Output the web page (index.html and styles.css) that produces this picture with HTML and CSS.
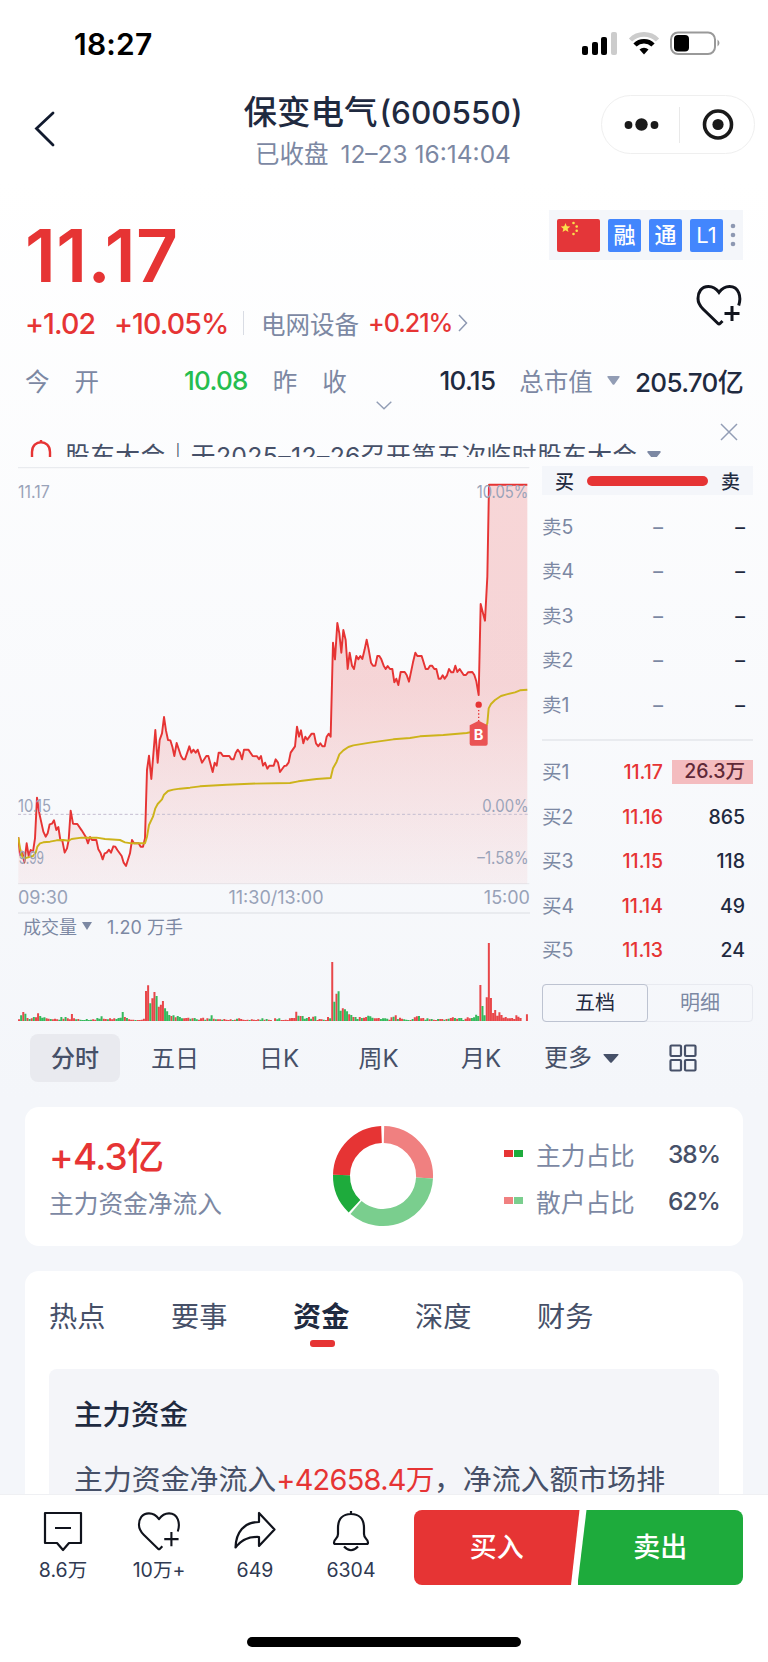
FILE: index.html
```html
<!DOCTYPE html>
<html lang="zh-CN">
<head>
<meta charset="utf-8">
<title>保变电气(600550)</title>
<link rel="stylesheet" href="styles.css">
</head>
<body>
<div class="page">
  <header class="status">
    <span class="clock">18:27</span>
    <svg class="status-icons" width="140" height="26" viewBox="0 0 140 26">
      <rect x="1" y="15" width="6" height="9" rx="2"/><rect x="11" y="11" width="6" height="13" rx="2"/><rect x="20" y="6" width="6" height="18" rx="2"/><rect x="30" y="1" width="6" height="23" rx="2" fill="#ccc"/>
      <g fill="none" stroke-width="4.6"><path d="M49.500 9a19 19 0 0 1 27 0" stroke="#ccc"/><path d="M54 14a12.700 12.700 0 0 1 18 0" stroke="#000"/></g>
      <path d="M58.500 18.500a6.500 6.500 0 0 1 9 0L63 23.500z"/>
      <rect x="90" y="1.500" width="44" height="21.500" rx="7" fill="none" stroke="#999" stroke-width="2"/><rect x="93" y="4" width="15" height="16.500" rx="4"/><path d="M136.500 8.500q4 3.500 0 7z" fill="#999"/>
    </svg>
  </header>

  <nav class="navbar">
    <svg class="back" width="24" height="38" viewBox="0 0 24 38"><path d="M20 3 3.500 18.500 20 35"/></svg>
    <div class="heading">
      <h1>保变电气<span class="code">(600550)</span></h1>
      <p>已收盘 <span class="date">12–23 16:14:04</span></p>
    </div>
    <div class="capsule">
      <svg width="154" height="58" viewBox="0 0 154 58"><circle cx="26.500" cy="29" r="3.900"/><circle cx="39.500" cy="28.500" r="6.200"/><circle cx="52.500" cy="29" r="3.900"/><path d="M77.500 11v36" stroke="#e9e9e9" stroke-width="1"/><circle cx="116" cy="28.500" r="13.500" fill="none" stroke="#1a1a1a" stroke-width="3.600"/><circle cx="116" cy="28.500" r="5.600"/></svg>
    </div>
  </nav>

  <section class="quote">
    <div class="price-row">
      <div class="price">11.17</div>
      <div class="tags">
        <svg width="43" height="33" viewBox="0 0 43 33"><rect width="43" height="33" rx="2" fill="#e43639"/><g fill="#fbe04c"><path d="m8.500 4 1.300 3.300 3.500.2-2.700 2.200.9 3.400-3-1.900-3 1.900.9-3.400-2.700-2.200 3.500-.2z"/><circle cx="16.500" cy="4" r="1.300"/><circle cx="19.700" cy="7.500" r="1.300"/><circle cx="19.700" cy="11.800" r="1.300"/><circle cx="16.500" cy="15" r="1.300"/></g></svg>
        <b>融</b><b>通</b><b class="lv">L1</b>
        <svg class="more" width="6" height="24" viewBox="0 0 6 24"><circle cx="3" cy="3" r="2.300"/><circle cx="3" cy="12" r="2.300"/><circle cx="3" cy="21" r="2.300"/></svg>
      </div>
    </div>
    <div class="change-row">
      <span class="up chg">+1.02</span><span class="up pct">+10.05%</span>
      <i class="bar"></i>
      <span class="sector">电网设备</span><span class="up sector-pct">+0.21%</span>
      <svg width="10" height="18" viewBox="0 0 10 18" fill="none" stroke="#8d98b2" stroke-width="1.500"><path d="m1 1 7.500 8L1 17"/></svg>
      <svg class="fav" width="48" height="44" viewBox="0 0 48 44"><use href="#heart"/></svg>
    </div>
    <div class="stats">
      <div class="stat s1"><span>今<i></i>开</span><b class="down">10.08</b></div>
      <div class="stat s2"><span>昨<i></i>收</span><b>10.15</b></div>
      <div class="stat s3"><span>总市值</span><svg width="13" height="9" viewBox="0 0 13 9"><path d="M1.500 0h10q2 0 .8 1.500L7.500 8.300q-1 1-2 0L.7 1.500Q-.5 0 1.500 0" fill="#929db5"/></svg><b>205.70亿</b></div>
    </div>
    <svg class="expand" width="16" height="9" viewBox="0 0 16 9"><path d="m.7.7 7.300 7 7.300-7"/></svg>
    <div class="notice">
      <svg class="bell" width="22" height="24" viewBox="0 0 22 24" fill="none" stroke="#e63434" stroke-width="2.400"><path d="M11 1v3M2 24v-11C2 0 20 0 20 13v11"/></svg>
      <span>股东大会｜于2025–12–26召开第五次临时股东大会</span><svg class="tri" width="14" height="9" viewBox="0 0 14 9"><path d="M1 0h12q1 0 .5 1.500L8 8.300q-1 1-2 0L.5 1.500Q0 0 1 0" fill="#7c88a3"/></svg>
    </div>
    <svg class="close" width="18" height="18" viewBox="0 0 18 18"><path d="m1 1 16 16M17 1 1 17"/></svg>
  </section>

  <section class="market">
    <div class="charts">
      <svg class="line-chart" width="512" height="418" viewBox="54 21 1536 1254">
        <defs><linearGradient id="area" x1="0" y1="74" x2="0" y2="1271" gradientUnits="userSpaceOnUse"><stop offset="0" stop-color="#e63434" stop-opacity=".19"/><stop offset=".5" stop-color="#e63434" stop-opacity=".19"/><stop offset="1" stop-color="#e63434" stop-opacity=".05"/></linearGradient></defs>
        <path d="M54 22.500H1588M54 1271H1588" stroke="#e9ebef" stroke-width="4"/>
        <path id="areaPath" fill="url(#area)"/>
        <path d="M54 1063H1588" stroke="#c5bdd0" stroke-width="3" stroke-dasharray="9 7"/>
        <path id="pricePath" fill="none" stroke="#e63434" stroke-width="5.800" stroke-linejoin="round"/>
        <path fill="none" stroke="#cdb31b" stroke-width="5.800" stroke-linejoin="round" d="M55 1132 60 1165 67 1190 73 1195 99 1188 107 1178 112 1160 120 1150 130 1147 150 1145 170 1141 190 1140 206 1142 215 1137 245 1133 290 1133 315 1137 360 1140 375 1147 395 1150 435 1150 441 1130 447 1095 459 1070 466 1045 473 1032 486 1018 492 1004 504 993 520 989 540 986 570 983 600 979 680 974 750 971 870 969 895 964 950 957 992 954 999 925 1010 905 1018 883 1030 871 1045 861 1060 856 1110 848 1180 838 1230 834 1260 829 1330 825 1400 819 1435 812 1455 805 1462 790 1466 745 1473 732 1485 720 1503 708 1520 703 1545 697 1560 691 1582 689"/>
        <circle cx="1436" cy="734" r="9.500" fill="#e63434"/><path d="M1436 750v34" stroke="#e63434" stroke-width="4" stroke-dasharray="4 6"/>
        <path d="M1436 782 1463 796V851q0 6-6 6H1415q-6 0-6-6V796z" fill="#ea5354"/>
        <text class="mark" x="1436" y="840" text-anchor="middle">B</text>
        <g class="axis"><text x="54" y="115" textLength="95" lengthAdjust="spacingAndGlyphs">11.17</text><text x="54" y="1055" textLength="99" lengthAdjust="spacingAndGlyphs">10.15</text><text x="56" y="1211" textLength="76" lengthAdjust="spacingAndGlyphs">9.99</text><text x="1430" y="115" textLength="155" lengthAdjust="spacingAndGlyphs">10.05%</text><text x="1447" y="1055" textLength="139" lengthAdjust="spacingAndGlyphs">0.00%</text><text x="1432" y="1211" textLength="154" lengthAdjust="spacingAndGlyphs">–1.58%</text></g>
      </svg>
      <div class="times"><span>09:30</span><span>11:30/13:00</span><span>15:00</span></div>
      <div class="volume-head"><span>成交量</span><svg width="10" height="8" viewBox="0 0 10 8"><path d="M0 0h10L5 8z" fill="#7c88a3"/></svg><span>1.20 万手</span></div>
      <svg class="volume" width="511" height="81" viewBox="52 180 1484 243" preserveAspectRatio="none"><path id="volUp" stroke="#e8474a"/><path id="volDown" stroke="#35b95c"/></svg>
    </div>
    <aside class="book">
      <div class="ratio"><b>买</b><i></i><b>卖</b></div>
      <div class="levels">
        <div><span>卖5</span><em class="none">–</em><b>–</b></div>
        <div><span>卖4</span><em class="none">–</em><b>–</b></div>
        <div><span>卖3</span><em class="none">–</em><b>–</b></div>
        <div><span>卖2</span><em class="none">–</em><b>–</b></div>
        <div><span>卖1</span><em class="none">–</em><b>–</b></div>
      </div>
      <hr>
      <div class="levels">
        <div><span>买1</span><em>11.17</em><b class="hot">26.3万</b></div>
        <div><span>买2</span><em>11.16</em><b>865</b></div>
        <div><span>买3</span><em>11.15</em><b>118</b></div>
        <div><span>买4</span><em>11.14</em><b>49</b></div>
        <div><span>买5</span><em>11.13</em><b>24</b></div>
      </div>
      <div class="switch"><span class="on">五档</span><span>明细</span></div>
    </aside>
  </section>

  <nav class="periods">
    <span class="on">分时</span><span>五日</span><span>日K</span><span>周K</span><span>月K</span><span class="more">更多<svg width="16" height="9" viewBox="0 0 16 9"><path d="M1 0h14q1 0 .4 1L9 8.300q-1 1-2 0L.6 1Q0 0 1 0" fill="#465068"/></svg></span>
    <svg class="grid" width="28" height="28" viewBox="0 0 28 28"><rect x="1.500" y="1.500" width="10.500" height="10.500" rx="1"/><rect x="16" y="1.500" width="10.500" height="10.500" rx="1"/><rect x="1.500" y="16" width="10.500" height="10.500" rx="1"/><rect x="16" y="16" width="10.500" height="10.500" rx="1"/></svg>
  </nav>

  <section class="card flow">
    <div class="net"><div class="amount">+4.3<span>亿</span></div><div class="label">主力资金净流入</div></div>
    <svg class="donut" width="102" height="102" viewBox="-51 -51 102 102" fill="none" stroke-width="17">
      <path d="M1 -41.500A41.500 41.500 0 0 1 41.500 2" stroke="#f08080"/>
      <path d="M41.500 2A41.500 41.500 0 0 1 -27 31.500" stroke="#7ace8e"/>
      <path d="M-28.500 30.200A41.500 41.500 0 0 1 -41.500 -1" stroke="#1eab3c"/>
      <path d="M-41.500 -1A41.500 41.500 0 0 1 -1.500 -41.500" stroke="#e63434"/>
    </svg>
    <div class="legend">
      <div><i class="sq m1"></i><i class="sq m2"></i><span>主力占比</span><b>38%</b></div>
      <div><i class="sq r1"></i><i class="sq r2"></i><span>散户占比</span><b>62%</b></div>
    </div>
  </section>

  <section class="card detail">
    <nav class="tabs"><span>热点</span><span>要事</span><span class="on">资金</span><span>深度</span><span>财务</span></nav>
    <article class="panel">
      <h2>主力资金</h2>
      <p>主力资金净流入<span class="up">+42658.4万</span>，净流入额市场排</p>
    </article>
  </section>

  <footer class="footer">
    <div class="actions">
      <div class="act"><svg width="42" height="42" viewBox="0 0 42 42"><path d="M3 3h36v30H27l-6 7-6-7H3zM13 18h16"/></svg><span>8.6万</span></div>
      <div class="act"><svg width="46" height="42" viewBox="0 0 48 44"><g id="heart"><path d="M43.700 22.500C46.500 14 44 3.500 34.500 3.500c-5 0-8 2.500-10.500 6-2.500-3.500-5.500-6-10.500-6C6 3.500 3 9.500 3 15.500c0 5 2 7.500 5 10.500l15 14.500q1 1 2 0l2.500-2.500M37 23v15M29.500 30.500h15"/></g></svg><span>10万+</span></div>
      <div class="act"><svg width="42" height="42" viewBox="0 0 42 42"><path d="M25 3v9C10 12 2 22 1.500 37.500 8 29 15 26.500 25 27v9l15.500-16.500z"/></svg><span>649</span></div>
      <div class="act"><svg width="42" height="42" viewBox="0 0 42 42"><path d="M21 1v3M4 32.500c0-4 4-3 4-8.500V18C8 9 13 4 21 4s13 5 13 14v6c0 5.500 4 4.500 4 8.500q0 1.500-1.500 1.500h-31Q4 34 4 32.500zM14 36.500q7 7.500 14 0"/></svg><span>6304</span></div>
    </div>
    <div class="trade"><span class="buy">买入</span><span class="sell">卖出</span></div>
    <i class="home"></i>
  </footer>
</div>
<script src="chart.js"></script>
</body>
</html>
```
FILE: styles.css
```css
* { box-sizing: border-box; }
body { margin: 0; font-family: Inter, "Noto Sans CJK SC", sans-serif; color: #1f2a40; }
h1, h2, p { margin: 0; font-weight: 500; }
i, em { font-style: normal; }
svg { display: block; flex: none; }
.page { width: 768px; height: 1662px; overflow: hidden; display: flex; flex-direction: column; background: linear-gradient(#fff 180px, #f4f6fa 1100px); }
.page > * { flex: none; }
.up { color: #e63434; }
.down { color: #25bd4f; }

.status { height: 86px; padding: 2px 47px 0 74px; display: flex; align-items: center; justify-content: space-between; }
.clock { color: #000; font-size: 30px; font-weight: 600; letter-spacing: .2px; }

.navbar { height: 104px; padding: 0 13px 0 33px; display: grid; grid-template-columns: 120px 1fr 154px; align-items: start; }
.back { margin-top: 24px; fill: none; stroke: #111a2e; stroke-width: 2.800; stroke-linecap: round; }
.heading { text-align: center; white-space: nowrap; padding-left: 12px; }
.heading h1 { font-size: 33.500px; line-height: 52px; height: 51px; }
.code { font-size: 31.500px; margin-left: 2px; }
.heading p { font-size: 24.500px; line-height: 34px; color: #7c88a3; font-weight: 400; }
.date { margin-left: 5px; }
.capsule { margin-top: 9px; height: 59px; border: 1px solid #efefef; border-radius: 30px; background: #fff; fill: #1a1a1a; }

.quote { height: 277px; padding: 20px 25px 0; position: relative; }
.price-row { height: 92px; display: flex; justify-content: space-between; align-items: flex-start; }
.price { color: #e63434; font-size: 73px; font-weight: 600; line-height: 92px; letter-spacing: .4px; }
.tags { height: 50px; width: 194px; background: #f4f6fa; display: flex; align-items: center; gap: 8px; padding-left: 8px; }
.tags b { width: 33px; height: 33px; background: #4386fd; color: #fff; border-radius: 2px; font-size: 22px; line-height: 32px; text-align: center; font-weight: 500; }
.tags .lv { font-weight: 400; }
.tags .more { fill: #8d98b2; margin-left: -1px; }
.change-row { height: 42px; display: flex; align-items: center; white-space: nowrap; position: relative; }
.chg, .pct { font-size: 28.500px; font-weight: 500; letter-spacing: -.9px; }
.chg { width: 89px; } .pct { width: 129px; }
.bar { width: 1px; height: 24px; background: #d9dce4; margin-right: 17px; }
.sector { font-size: 24.500px; color: #7c88a3; width: 107px; }
.sector-pct { font-size: 25px; font-weight: 500; letter-spacing: -1px; width: 90px; }
.fav { position: absolute; right: 0; top: -19px; fill: none; stroke: #10131c; stroke-width: 3; }
.stats { display: flex; height: 72px; align-items: center; font-size: 24.500px; color: #7c88a3; white-space: nowrap; }
.stat { display: flex; align-items: center; justify-content: space-between; }
.stat span i { display: inline-block; width: 25px; }
.stat b { font-weight: 500; font-size: 26px; color: #1f2a40; letter-spacing: -.7px; }
.stat b.down { color: #25bd4f; }
.s1 { width: 223px; margin-right: 25px; } .s2 { width: 223px; margin-right: 24px; } .s3 { width: 224px; }
.expand { margin: -15px auto 0; fill: none; stroke: #929db5; stroke-width: 1.400; }
.notice { position: absolute; left: 30px; top: 247px; width: 660px; height: 20px; overflow: hidden; display: flex; align-items: flex-start; font-size: 24.800px; line-height: 39px; color: #465068; white-space: nowrap; letter-spacing: .35px; }
.notice .bell { margin: 2px 13px 0 0; }
.notice .tri { margin: 14px 0 0 10px; }
.close { position: absolute; left: 720px; top: 233px; stroke: #929db5; stroke-width: 1.500; }

.market { height: 565px; padding: 0 15px 0 18px; display: flex; justify-content: space-between; }
.charts { width: 512px; }
.axis text { font-size: 50px; fill: #9aa3b9; }
.mark { font-size: 44px; font-weight: 700; fill: #fff; }
.times { display: flex; justify-content: space-between; height: 29px; border-bottom: 2px solid #e9ebef; font-size: 18px; line-height: 26px; color: #98a2b8; }
.volume-head { display: flex; align-items: center; height: 26px; padding: 0 0 2px 5px; font-size: 18px; color: #7c88a3; }
.volume-head svg { margin: 0 15px 0 5px; }
.volume { stroke-width: 5.800; }
.book { width: 211px; margin-top: -1px; }
.ratio { height: 29px; background: #f4f6fa; display: flex; align-items: center; justify-content: space-between; padding: 0 13px; font-size: 19px; }
.ratio b { font-weight: 500; }
.ratio i { width: 121px; height: 10px; border-radius: 5px; background: #e63434; }
.levels { font-size: 19.500px; padding-top: 10px; }
.levels div { height: 44.500px; display: grid; grid-template-columns: 44px 77px 90px; align-items: center; line-height: 28px; padding-bottom: 1px; }
.levels span { color: #7c88a3; }
.levels em { color: #e63434; text-align: right; font-weight: 500; }
.levels .none { color: #7c88a3; }
.levels b { color: #1f2a40; text-align: right; font-weight: 500; padding-right: 8px; }
.levels .hot { background: #f4bcbf; color: #5f2938; line-height: 23px; margin-left: 9px; height: 24px; }
hr { border: 0; height: 2px; background: #e9ebef; margin: 11px 0 0; }
.switch { display: flex; height: 38px; margin-top: 11px; border: 1px solid #e8eaf0; border-radius: 4px; font-size: 20px; }
.switch span { width: 105px; text-align: center; line-height: 36px; color: #7c88a3; }
.switch .on { width: 107px; margin: -1px 0 -1px -1px; border: 1.500px solid #bdc3d1; border-radius: 4px; color: #1f2a40; }

.periods { height: 75px; padding: 2px 0 0 30px; display: grid; grid-template-columns: 90px 110px 98px 101px 104px 132px 60px; align-items: start; font-size: 24px; line-height: 50px; color: #465068; text-align: center; }
.periods span { height: 48px; }
.periods .on { background: #e9eaef; border-radius: 8px; font-weight: 500; }
.periods .more { display: flex; align-items: center; gap: 11px; padding-left: 11px; }
.periods .grid { margin: 10px 0 0 4px; fill: none; stroke: #465068; stroke-width: 2.200; }

.card { margin: 0 25px; background: #fff; border-radius: 14px; }
.flow { height: 139px; display: grid; grid-template-columns: 307px 172px 1fr; padding: 18px 0 0 0; }
.net { padding: 5px 0 0 24px; }
.amount { color: #e63434; font-size: 37px; line-height: 53px; font-weight: 500; letter-spacing: -.8px; }
.label { font-size: 24.700px; line-height: 43px; color: #7c88a3; }
.legend { font-size: 24.700px; color: #7c88a3; padding-top: 5px; }
.legend div { height: 47px; display: flex; align-items: center; }
.sq { width: 9px; height: 7px; margin-right: 1px; }
.m1 { background: #e63434; } .m2 { background: #1eab3c; } .r1 { background: #f08080; } .r2 { background: #7ace8e; }
.legend span { margin-left: 12px; width: 132px; }
.legend b { font-size: 24.500px; font-weight: 500; color: #465068; letter-spacing: -1px; }

.detail { margin-top: 25px; height: 223px; border-radius: 14px 14px 0 0; padding: 0 24px; overflow: hidden; }
.tabs { height: 98px; display: flex; gap: 66px; font-size: 28.200px; line-height: 92px; color: #465068; }
.tabs span { position: relative; width: 56px; white-space: nowrap; }
.tabs .on { color: #1f2a40; font-weight: 700; }
.tabs .on::after { content: ""; position: absolute; left: 17px; top: 69px; width: 25px; height: 7px; border-radius: 3px; background: #e63434; }
.panel { height: 160px; background: #f4f5f9; border-radius: 8px; padding: 13px 25px; font-size: 28.900px; color: #465068; white-space: nowrap; }
.panel h2 { font-size: 28.500px; line-height: 65px; color: #1f2a40; font-weight: 500; }
.panel p { line-height: 66px; font-weight: 400; }
.panel .up { letter-spacing: -.7px; }

.footer { height: 168px; background: #fff; position: relative; border-top: 1px solid #eff0f3; display: flex; justify-content: space-between; padding: 15px 25px 0 15px; }
.actions { display: flex; }
.act { width: 96px; display: flex; flex-direction: column; align-items: center; font-size: 19.500px; line-height: 36px; color: #303a52; }
.act svg { fill: none; stroke: #10131c; stroke-width: 2.200; stroke-linejoin: round; }
.trade { width: 329px; height: 75px; display: flex; color: #fff; font-size: 27px; font-weight: 500; line-height: 76px; text-align: center; }
.buy { width: 166px; background: #e63434; border-radius: 8px 0 0 8px; clip-path: polygon(0 0, 100% 0, 157px 100%, 0 100%); }
.sell { width: 166px; margin-left: -2px; background: #1eab3c; border-radius: 0 8px 8px 0; clip-path: polygon(9px 0, 100% 0, 100% 100%, 0 100%); }
.home { position: absolute; left: 247px; top: 142px; width: 274px; height: 10px; border-radius: 5px; background: #000; }
```
FILE: chart.js
```js
// Minute prices as "x y" pairs in the chart's viewBox units.
const price = `55 1132 60 1185 67 1175 73 1208 80 1150 86 1188 92 1170 99 1175 105 1135 111 1013 118 1060 130 1115 137 1130 143 1120 149 1093 156 1091 162 1081 169 1110 175 1101 181 1140 187 1142 194 1178 201 1165 206 1140 212 1052 219 1091 232 1092 245 1111 257 1130 264 1150 270 1131 276 1140 289 1140 295 1168 302 1180 308 1198 314 1180 320 1178 327 1169 333 1178 340 1159 346 1160 352 1170 365 1188 371 1208 378 1218 390 1180 396 1140 402 1150 416 1150 422 1160 429 1160 435 1135 441 930 447 887 454 957 466 810 473 908 479 840 486 820 492 771 498 812 504 840 511 841 517 860 523 888 530 849 543 888 549 898 555 898 568 859 574 878 580 869 587 878 593 869 606 908 619 888 625 888 638 936 644 908 650 917 656 878 662 878 669 888 688 888 694 898 701 898 707 879 713 869 720 878 726 898 732 869 745 869 758 888 771 889 777 898 783 888 789 917 795 908 802 926 808 917 821 917 827 898 834 908 840 936 853 918 859 917 866 907 872 878 885 859 891 800 897 830 903 811 910 850 916 830 922 839 935 821 942 821 948 850 955 859 961 850 967 859 974 859 980 830 986 821 992 830 999 548 1005 598 1012 489 1018 520 1024 578 1030 510 1037 540 1043 627 1049 578 1056 617 1062 627 1069 588 1075 598 1081 588 1087 597 1094 568 1100 539 1106 568 1113 608 1119 617 1126 617 1132 588 1138 588 1144 598 1151 617 1157 627 1163 618 1170 627 1177 627 1183 667 1189 656 1195 675 1202 636 1214 636 1220 645 1227 665 1239 607 1246 578 1252 588 1265 588 1277 627 1284 627 1290 617 1296 617 1303 627 1309 627 1316 656 1322 656 1328 646 1334 656 1341 646 1347 627 1354 637 1360 637 1366 617 1372 636 1379 627 1391 645 1398 645 1404 637 1417 636 1423 645 1429 664 1436 705 1442 432 1449 460 1455 482 1462 350 1467 74 1582 74`;
document.getElementById('pricePath').setAttribute('d', 'M' + price);
document.getElementById('areaPath').setAttribute('d', 'M' + price + ' 1582 1271 55 1271Z');

// One entry per minute: direction (r up, g down) and bar height.
const volume = 'r5 g17 r27 g22 r9 g6 r8 g12 r11 r23 g15 g10 g11 r8 r7 g6 r5 r7 r5 g4 g12 r7 g12 r8 r5 r21 r8 g5 r6 g4 g3 g3 g6 g3 g4 r5 r4 g9 g7 g14 r7 r6 g5 r8 r5 r8 g6 g9 g10 g27 r12 g9 r5 r4 r4 g3 r3 r3 r4 r7 r90 r107 g53 r68 r87 g75 r43 r49 r60 g38 g29 g18 r15 g17 r11 g15 g12 g8 r8 r9 r10 g7 r8 g9 g5 r4 r8 r10 g4 r8 g7 g17 r7 g5 r5 r5 g4 r6 r4 r3 r5 g3 r4 g7 r8 r6 r4 r3 r4 g3 r5 r4 r3 r5 g4 g8 r4 g6 r4 r3 r0 r8 g5 g8 r3 r3 r4 r3 r8 r9 r9 r28 g16 r15 g15 g7 g9 r12 g7 r13 g14 r3 r6 r5 g4 r3 r12 g8 r177 g58 r82 g89 g31 r38 g35 g29 r20 g18 r12 g12 g6 r12 g9 r10 r12 g16 g14 g10 r8 r8 r9 g6 g8 g8 g7 r4 r11 g13 r17 g6 r10 r7 g5 g4 g3 r3 g6 r11 r14 g15 r8 r9 g4 g8 r5 g6 r4 r3 g6 r6 r6 g4 r6 g7 r9 r11 g9 r7 g9 g9 g3 r7 r11 r8 g9 g11 g19 g15 r108 g45 g17 r71 r234 r69 r24 r33 r16 r26 r18 r10 r12 r8 r8 r9 r6 r17 r13 r9 r0 r0 r20'.split(' ');
const paths = { r: '', g: '' };
const step = 1475 / (volume.length - 1);
volume.forEach((v, i) => { paths[v[0]] += `M${(55 + i * step).toFixed(1)} 423v-${v.slice(1)}`; });
document.getElementById('volUp').setAttribute('d', paths.r);
document.getElementById('volDown').setAttribute('d', paths.g);
```
